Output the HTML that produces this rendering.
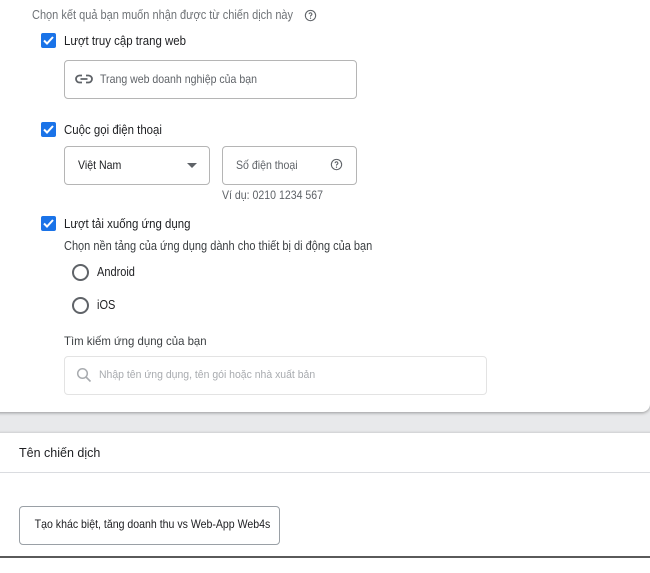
<!DOCTYPE html>
<html><head><meta charset="utf-8"><style>
*{margin:0;padding:0;box-sizing:border-box}
body{width:650px;height:558px;background:#e8e9eb;font-family:"Liberation Sans",Arial,sans-serif;position:relative;overflow:hidden;color:#202124}
.a{position:absolute;white-space:nowrap}
.s{transform:scaleX(0.88);transform-origin:left center}
.card1{position:absolute;left:-10px;top:-10px;width:660px;height:422px;background:#fff;border-radius:8px;box-shadow:0 1px 3px rgba(0,0,0,.35)}
.card2{position:absolute;left:-10px;top:433px;width:670px;height:140px;background:#fff;border-radius:8px;box-shadow:0 -1px 2px rgba(0,0,0,.12)}
.cb{position:absolute;left:41px;width:15px;height:15px;background:#1a73e8;border-radius:2px}
.cb svg{position:absolute;left:1px;top:1px}
.box{position:absolute;border:1px solid #b5b5b5;border-radius:4px;background:#fff}
.lbl{font-size:13px;color:#202124}
.rad{position:absolute;left:72px;width:17px;height:17px;border:2px solid #5f6368;border-radius:50%}
</style></head><body>
<div class="card1"></div>
<div class="a s" style="left:32px;top:8px;font-size:12.5px;color:#6f7377">Chọn kết quả bạn muốn nhận được từ chiến dịch này</div>
<svg class="a" style="left:304px;top:9px" width="13" height="13" viewBox="0 0 24 24"><circle cx="12" cy="12" r="9.5" fill="none" stroke="#5f6368" stroke-width="2"/><path d="M9.5 9.5a2.5 2.5 0 1 1 3.5 2.3c-.7.4-1 .9-1 1.7v.5" fill="none" stroke="#5f6368" stroke-width="2"/><circle cx="12" cy="17" r="1.2" fill="#5f6368"/></svg>

<div class="cb" style="top:33px"><svg width="13" height="13" viewBox="0 0 13 13"><path d="M2 6.5l3 3 6-6.5" fill="none" stroke="#fff" stroke-width="2"/></svg></div>
<div class="a lbl s" style="left:64px;top:33px">Lượt truy cập trang web</div>
<div class="box" style="left:64px;top:60px;width:293px;height:39px"></div>
<svg class="a" style="left:75px;top:72px" width="18" height="14" viewBox="0 0 18 14"><path d="M7 3.5H4.5a3.5 3.5 0 0 0 0 7H7M11 3.5h2.5a3.5 3.5 0 0 1 0 7H11M5.5 7h7" fill="none" stroke="#5f6368" stroke-width="1.8"/></svg>
<div class="a s" style="left:100px;top:72px;font-size:12px;color:#5f6368">Trang web doanh nghiệp của bạn</div>

<div class="cb" style="top:122px"><svg width="13" height="13" viewBox="0 0 13 13"><path d="M2 6.5l3 3 6-6.5" fill="none" stroke="#fff" stroke-width="2"/></svg></div>
<div class="a lbl s" style="left:64px;top:122px">Cuộc gọi điện thoại</div>
<div class="box" style="left:64px;top:146px;width:146px;height:39px"></div>
<div class="a s" style="left:78px;top:158px;font-size:12px">Việt Nam</div>
<div class="a" style="left:187px;top:163px;width:0;height:0;border-left:5px solid transparent;border-right:5px solid transparent;border-top:5px solid #5f6368"></div>
<div class="box" style="left:222px;top:146px;width:135px;height:39px"></div>
<div class="a s" style="left:236px;top:158px;font-size:12px;color:#5f6368">Số điện thoại</div>
<svg class="a" style="left:330px;top:158px" width="13" height="13" viewBox="0 0 24 24"><circle cx="12" cy="12" r="9.5" fill="none" stroke="#5f6368" stroke-width="2"/><path d="M9.5 9.5a2.5 2.5 0 1 1 3.5 2.3c-.7.4-1 .9-1 1.7v.5" fill="none" stroke="#5f6368" stroke-width="2"/><circle cx="12" cy="17" r="1.2" fill="#5f6368"/></svg>
<div class="a s" style="left:222px;top:188px;font-size:12px;color:#5f6368">Ví dụ: 0210 1234 567</div>

<div class="cb" style="top:216px"><svg width="13" height="13" viewBox="0 0 13 13"><path d="M2 6.5l3 3 6-6.5" fill="none" stroke="#fff" stroke-width="2"/></svg></div>
<div class="a lbl s" style="left:64px;top:216px">Lượt tải xuống ứng dụng</div>
<div class="a s" style="left:64px;top:239px;font-size:12.5px;color:#3c4043">Chọn nền tảng của ứng dụng dành cho thiết bị di động của bạn</div>
<div class="rad" style="top:264px"></div>
<div class="a s" style="left:97px;top:265px;font-size:12.5px">Android</div>
<div class="rad" style="top:297px"></div>
<div class="a s" style="left:97px;top:298px;font-size:12.5px">iOS</div>
<div class="a" style="left:64px;top:334px;font-size:12px;color:#3c4043;transform:scaleX(.95);transform-origin:left">Tìm kiếm ứng dụng của bạn</div>
<div class="box" style="left:64px;top:356px;width:423px;height:39px;border-color:#e3e3e3"></div>
<svg class="a" style="left:76px;top:367px" width="16" height="16" viewBox="0 0 16 16"><circle cx="6.5" cy="6.5" r="4.8" fill="none" stroke="#a8abaf" stroke-width="1.5"/><path d="M10 10l4.5 4.5" stroke="#a8abaf" stroke-width="1.6"/></svg>
<div class="a" style="left:99px;top:369px;font-size:11px;color:#a8abaf;transform:scaleX(.95);transform-origin:left">Nhập tên ứng dụng, tên gói hoặc nhà xuất bản</div>

<div class="card2"></div>
<div class="a" style="left:19px;top:446px;font-size:12.5px">Tên chiến dịch</div>
<div class="a" style="left:0;top:472px;width:650px;height:1px;background:#dadce0"></div>
<div class="box" style="left:19px;top:506px;width:261px;height:39px;border-color:#9aa0a6"></div>
<div class="a" style="left:19px;top:517px;width:261px;text-align:center;font-size:12px;transform:scaleX(.88)">Tạo khác biệt, tăng doanh thu vs Web-App Web4s</div>
<div class="a" style="left:0;top:556px;width:650px;height:2px;background:#5a5a5a"></div>
</body></html>
